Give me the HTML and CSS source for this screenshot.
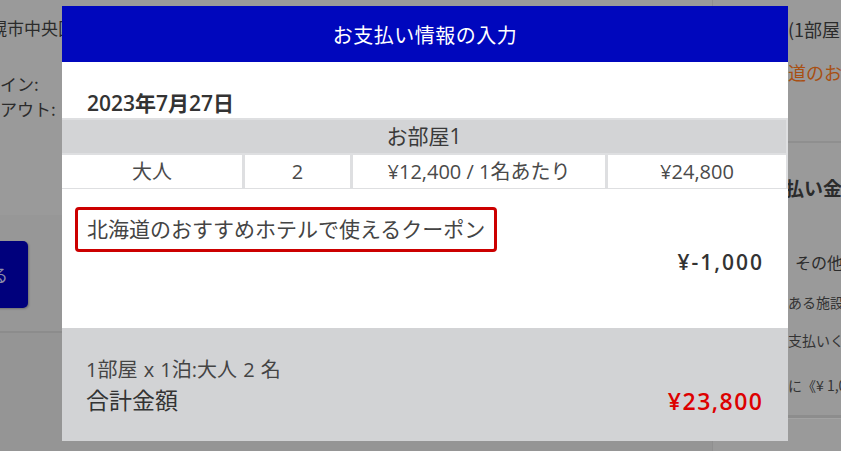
FILE: index.html
```html
<!DOCTYPE html>
<html lang="ja">
<head>
<meta charset="utf-8">
<title>お支払い情報の入力</title>
<link rel="stylesheet" href="styles.css">
</head>
<body>
<div class="page">
  <main class="main">
    <div class="info">
      <div class="addr">札幌市中央区</div>
      <div class="check first">チェックイン:</div>
      <div class="check">チェックアウト:</div>
    </div>
    <div class="action">
      <div class="btn">確定する</div>
    </div>
    <div class="rest"></div>
  </main>
  <aside class="side">
    <div class="side-top">
      <div class="side-line">(1部屋あたり)</div>
      <div class="side-line orange">道のおすすめ</div>
    </div>
    <div class="side-pay">
      <div class="pay-h">払い金額</div>
      <div class="other">その他</div>
      <div class="small">ある施設</div>
      <div class="small">支払いく</div>
      <div class="small last">に《¥ 1,000</div>
    </div>
    <div class="side-foot"></div>
  </aside>
</div>

<div class="modal">
  <div class="modal-head">お支払い情報の入力</div>
  <div class="date">2023年7月27日</div>
  <div class="rooms">
    <div class="room-title">お部屋1</div>
    <div class="cell">大人</div>
    <div class="cell">2</div>
    <div class="cell">¥12,400 / 1名あたり</div>
    <div class="cell">¥24,800</div>
  </div>
  <div class="coupons">
    <div class="coupon">北海道のおすすめホテルで使えるクーポン</div>
    <div class="discount">¥-1,000</div>
  </div>
  <div class="summary">
    <div class="sum-detail">1部屋 x 1泊:大人 2 名</div>
    <div class="sum-total">
      <span class="total-label">合計金額</span>
      <span class="total-price">¥23,800</span>
    </div>
  </div>
</div>
</body>
</html>
```
FILE: styles.css
```css
html, body {
  margin: 0;
  padding: 0;
}
body {
  width: 841px;
  height: 451px;
  overflow: hidden;
  background: #9a9a9a;
  font-family: "Noto Sans CJK JP", "Noto Sans", sans-serif;
  color: #2b2b2b;
}

/* background page (under the overlay) */
.page {
  display: grid;
  grid-template-columns: 713px 128px;
  height: 451px;
}
.main {
  display: flex;
  flex-direction: column;
  border-right: 1px solid #8f8f8f;
  overflow: hidden;
}
.info {
  height: 215px;
  font-size: 17px;
  line-height: 25px;
  white-space: nowrap;
  padding-top: 15px;
  box-sizing: border-box;
}
.addr {
  text-indent: -27px;
}
.check {
  text-indent: -68px;
}
.check.first {
  margin-top: 31px;
}
.action {
  height: 118px;
  background: #979797;
  border-bottom: 2px solid #8c8c8c;
  box-sizing: border-box;
  padding-top: 26px;
}
.btn {
  width: 100px;
  margin-left: -72px;
  height: 67px;
  background: #00007c;
  border-radius: 5px;
  color: #8d8da8;
  font-size: 17px;
  line-height: 67px;
  text-align: right;
  padding-right: 20px;
  box-sizing: border-box;
  white-space: nowrap;
  overflow: hidden;
  box-shadow: 1px 1px 2px rgba(0,0,0,0.25);
}
.rest {
  flex: 1;
  background: #959595;
}

.side {
  display: flex;
  flex-direction: column;
  white-space: nowrap;
  overflow: hidden;
}
.side-top {
  height: 143px;
  border-bottom: 2px solid #8f8f8f;
  padding: 17px 0 0 75px;
  box-sizing: border-box;
  font-size: 18px;
}
.side-line {
  line-height: 25px;
}
.side-line.orange {
  color: #a84f12;
  margin-top: 18px;
}
.side-pay {
  height: 275px;
  padding: 31px 0 0 75px;
  box-sizing: border-box;
  border-bottom: 3px solid #8d8d8d;
}
.pay-h {
  font-size: 19px;
  font-weight: 700;
  line-height: 28px;
  margin-left: -3px;
}
.other {
  font-size: 16px;
  line-height: 24px;
  margin: 48px 0 0 7px;
}
.small {
  font-size: 14px;
  line-height: 20px;
  margin-top: 18px;
  color: #333;
}
.small.last {
  margin-top: 25px;
}
.side-foot {
  flex: 1;
  border-top: 1px solid #a3a3a3;
}

/* modal */
.modal {
  position: fixed;
  left: 62px;
  top: 6px;
  width: 726px;
  background: #fff;
  color: #444;
  font-family: "Open Sans", "Noto Sans CJK JP", sans-serif;
}
.modal-head {
  height: 56px;
  background: #0007bd;
  color: #fff;
  display: flex;
  align-items: center;
  justify-content: center;
  font-size: 20px;
  letter-spacing: 0.5px;
}
.date {
  height: 56px;
  box-sizing: border-box;
  padding: 28px 0 0 25px;
  font-size: 21px;
  line-height: 26px;
  font-weight: 600;
  color: #333;
}
.rooms {
  display: grid;
  grid-template-columns: 180px 105px 252px 178px;
  column-gap: 3px;
  row-gap: 2px;
  background: #dedfe1;
  padding: 2px 2px 0 0;
  border-bottom: 1px solid #dedfe1;
}
.room-title {
  grid-column: 1 / -1;
  background: #d3d4d6;
  height: 33px;
  line-height: 33px;
  text-align: center;
  font-size: 21px;
  color: #3a3a3a;
}
.cell {
  background: #fff;
  height: 33px;
  line-height: 33px;
  text-align: center;
  font-size: 20px;
  color: #4a4a4a;
}
.coupons {
  height: 139px;
  box-sizing: border-box;
  padding: 18px 26px 0 13px;
  display: flex;
  flex-direction: column;
  align-items: flex-start;
}
.coupon {
  border: 3px solid #cc0000;
  border-radius: 4px;
  padding: 0 9px;
  line-height: 39px;
  font-size: 21px;
  color: #444;
}
.discount {
  align-self: flex-end;
  margin-top: -2px;
  line-height: 25px;
  font-size: 21px;
  font-weight: 600;
  letter-spacing: 2px;
  margin-right: -2px;
  color: #333;
}
.summary {
  background: #d2d3d5;
  padding: 28px 26px 27px 24px;
}
.sum-detail {
  font-size: 20px;
  line-height: 28px;
  color: #444;
  word-spacing: 1px;
}
.sum-total {
  display: flex;
  justify-content: space-between;
  align-items: center;
  height: 30px;
}
.total-label {
  font-size: 23px;
  color: #333;
}
.total-price {
  font-size: 23px;
  font-weight: 600;
  letter-spacing: 1.5px;
  margin-right: -1.5px;
  color: #dd0000;
  margin-top: 3px;
}
```
